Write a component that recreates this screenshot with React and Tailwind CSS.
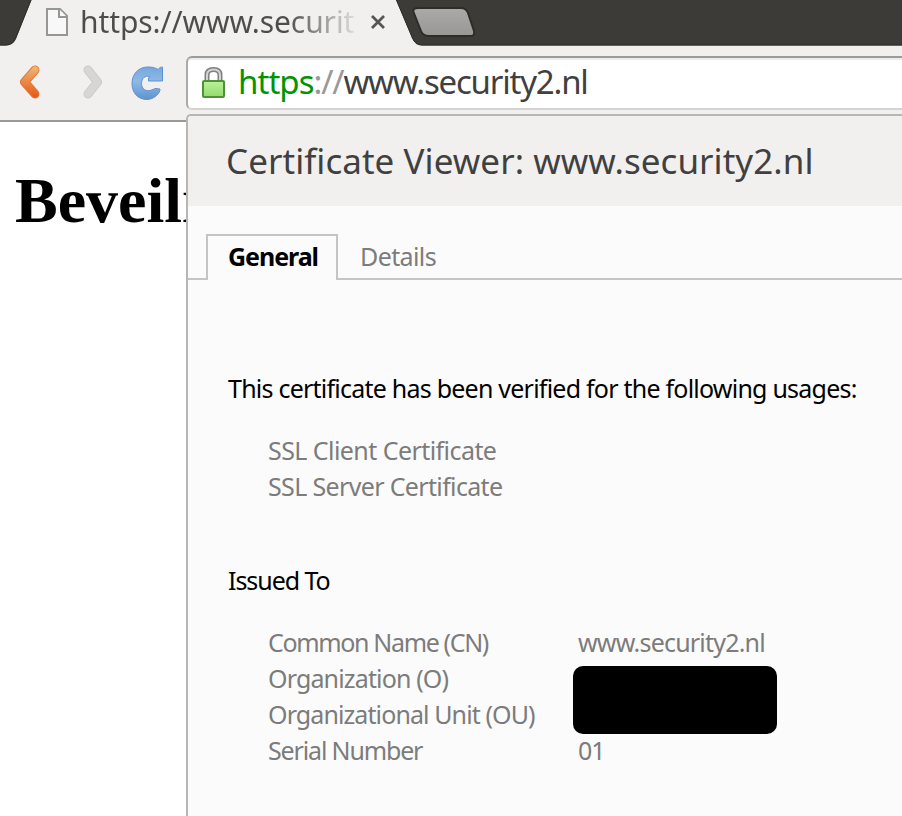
function TabStrip() {
  return (
    <div className="relative flex h-[46px] bg-[#3c3b37]">
      <svg className="absolute inset-0" width="902" height="46" viewBox="0 0 902 46">
        <path d="M0 46V45.500H6Q13 45.500 16 39L31.500 0H396L412 38Q415 45.500 422 45.500H902V46Z" fill="#f1f0ef" />
        <path d="M0 45H6Q12.500 45 15.500 38L31 0M396.500 0L412.500 38Q415.500 45 422 45H902" fill="none" stroke="#302f2c" strokeWidth="1" />
        <path d="M418 8H461Q466 8 468 13L474 31Q475 36 471 36H429Q423 36 421 31L413.500 12Q412.500 8 418 8Z" fill="url(#newTab)" stroke="#2d2c29" strokeWidth="2" />
        <defs>
          <linearGradient id="newTab" x1="0" y1="0" x2="0" y2="1">
            <stop offset="0" stopColor="#abaaa9" />
            <stop offset="1" stopColor="#989796" />
          </linearGradient>
        </defs>
      </svg>
      <div className="relative flex h-[44px] items-center pl-[46px]">
        <svg width="22" height="28" viewBox="0 0 22 28" fill="#f8f8f8" stroke="#979695" strokeWidth="2">
          <path d="M1 1H14L21 8V27H1Z" />
          <path d="M13 1V9H21" />
        </svg>
        <div className="ml-[12px] w-[276px] whitespace-nowrap bg-gradient-to-r from-[#4c4c4c] from-75% to-[#4c4c4c]/10 bg-clip-text text-[30px] leading-[42px] tracking-[-0.1px] text-transparent">
          https://www.securit
        </div>
        <svg className="ml-[15px]" width="14" height="14" viewBox="0 0 14 14" stroke="#555" strokeWidth="2.800">
          <path d="M1 1L13 13M13 1L1 13" />
        </svg>
      </div>
    </div>
  );
}

function Toolbar() {
  return (
    <div className="flex h-[76px] border-b-2 border-[#999] bg-[#f1f0ef] pt-[10px]">
      <div className="flex h-[54px] w-[186px] shrink-0 items-center">
        <svg width="186" height="54" viewBox="0 56 186 54" fill="none" strokeLinecap="round" strokeLinejoin="round">
          <defs>
            <linearGradient id="back" x1="0" y1="66" x2="0" y2="98" gradientUnits="userSpaceOnUse">
              <stop offset="0" stopColor="#f2b877" />
              <stop offset="0.5" stopColor="#ec8744" />
              <stop offset="1" stopColor="#e85514" />
            </linearGradient>
            <linearGradient id="reload" x1="0" y1="66" x2="0" y2="100" gradientUnits="userSpaceOnUse">
              <stop offset="0" stopColor="#74a6dc" />
              <stop offset="0.45" stopColor="#8fb9e6" />
              <stop offset="1" stopColor="#5b92d0" />
            </linearGradient>
          </defs>
          <path d="M35 70L24.500 82L35 94" stroke="#db7a3c" strokeWidth="9" />
          <path d="M35 70L24.500 82L35 94" stroke="url(#back)" strokeWidth="7" />
          <path d="M88 70L97.500 82L88 94" stroke="#cbc9c7" strokeWidth="9" />
          <path d="M88 70L97.500 82L88 94" stroke="#d8d6d4" strokeWidth="7" />
          <path d="M162.500 67.500V81H148.500V78L150 76.500C145 75 141.500 78.500 141.500 83.500C141.500 89 146 91.500 150 90.500C153 89.800 154 88.500 156 88.500L160 89C160.500 93 154 99.500 147 99.500C138 99.500 132 93 132 83.500C132 74 138.500 67 148 67C151.500 67 155 67.500 158 69.500L160 67.500Z" fill="url(#reload)" stroke="#5d93d0" strokeWidth="1" />
        </svg>
      </div>
      <div className="flex h-[54px] flex-1 items-center overflow-hidden rounded-l-[6px] border-2 border-r-0 border-[#d4d3d2] border-l-[#aaa] border-t-[#9c9b9a] bg-white pl-[14px] shadow-[inset_0_2px_0_#ececec]">
        <svg className="shrink-0" width="23" height="32" viewBox="0 0 23 32">
          <path d="M5 14V8Q5 2.500 11.500 2.500Q18 2.500 18 8V14" fill="none" stroke="#808080" strokeWidth="5" />
          <path d="M5 14V8Q5 2.500 11.500 2.500Q18 2.500 18 8V14" fill="none" stroke="#d4d4d4" strokeWidth="2" />
          <rect x="1" y="14" width="21" height="16" rx="1" fill="url(#lock)" stroke="#4f9138" strokeWidth="2" />
          <defs>
            <linearGradient id="lock" x1="0" y1="0" x2="0" y2="1">
              <stop offset="0" stopColor="#b9f397" />
              <stop offset="1" stopColor="#94d96f" />
            </linearGradient>
          </defs>
        </svg>
        <div className="-mt-[2px] ml-[13px] whitespace-nowrap text-[33px] leading-[48px] tracking-[-1.2px] text-[#404040]">
          <span className="tracking-[-0.95px] text-[#009500]">https</span>
          <span className="text-[#999]">://</span>www.security2.nl
        </div>
      </div>
    </div>
  );
}

function CertificateViewer() {
  return (
    <section className="absolute left-[186px] top-[114px] flex h-[702px] w-[716px] flex-col overflow-hidden rounded-tl-[5px] border-l-2 border-t-2 border-[#b7b6b5] bg-[#fbfbfb] text-[25px] leading-9 text-[#7c7c7c]">
      <h2 className="h-[90px] bg-[#f1f0ef] pl-[38px] text-[35px] leading-[90px] tracking-[0.050px] text-[#404040]">
        <span className="whitespace-nowrap">Certificate Viewer: www.security2.nl</span>
      </h2>
      <nav className="mt-[28px] flex h-[46px]">
        <div className="w-[18px] border-b-2 border-[#c4c4c4]" />
        <div className="w-[132px] border-2 border-b-0 border-[#c4c4c4] pl-[20px] font-bold leading-[40px] tracking-[-1.050px] text-black">General</div>
        <div className="flex-1 border-b-2 border-[#c4c4c4] pl-[22px] leading-[44px] tracking-[-0.6px]">Details</div>
      </nav>
      <div className="whitespace-nowrap pl-[40px] pt-[90px]">
        <h3 className="tracking-[-0.77px] text-black">This certificate has been verified for the following usages:</h3>
        <ul className="mt-[26px] pl-[40px]">
          <li className="tracking-[-0.56px]">SSL Client Certificate</li>
          <li className="tracking-[-0.65px]">SSL Server Certificate</li>
        </ul>
        <h3 className="mt-[58px] tracking-[-1.050px] text-black">Issued To</h3>
        <div className="mt-[26px] flex pl-[40px]">
          <div className="w-[305px]">
            <div className="tracking-[-1.35px]">Common Name (CN)</div>
            <div className="tracking-[-0.85px]">Organization (O)</div>
            <div className="tracking-[-0.9px]">Organizational Unit (OU)</div>
            <div className="tracking-[-1.15px]">Serial Number</div>
          </div>
          <div>
            <div className="pl-[5px] tracking-[-0.8px]">www.security2.nl</div>
            <div className="my-[3px] mt-[6px] h-[68px] w-[204px] rounded-[10px] bg-black" />
            <div className="-mt-[5px] pl-[5px] tracking-[-1px]">01</div>
          </div>
        </div>
      </div>
    </section>
  );
}

export default function App() {
  return (
    <div className="relative h-[816px] w-[902px] overflow-hidden bg-white font-['Noto_Sans','Open_Sans',sans-serif]">
      <TabStrip />
      <Toolbar />
      <h1 className="ml-[15px] mt-[42px] whitespace-nowrap font-['Liberation_Serif',serif] text-[64px] font-bold leading-[74px] text-black">Beveili</h1>
      <CertificateViewer />
    </div>
  );
}
